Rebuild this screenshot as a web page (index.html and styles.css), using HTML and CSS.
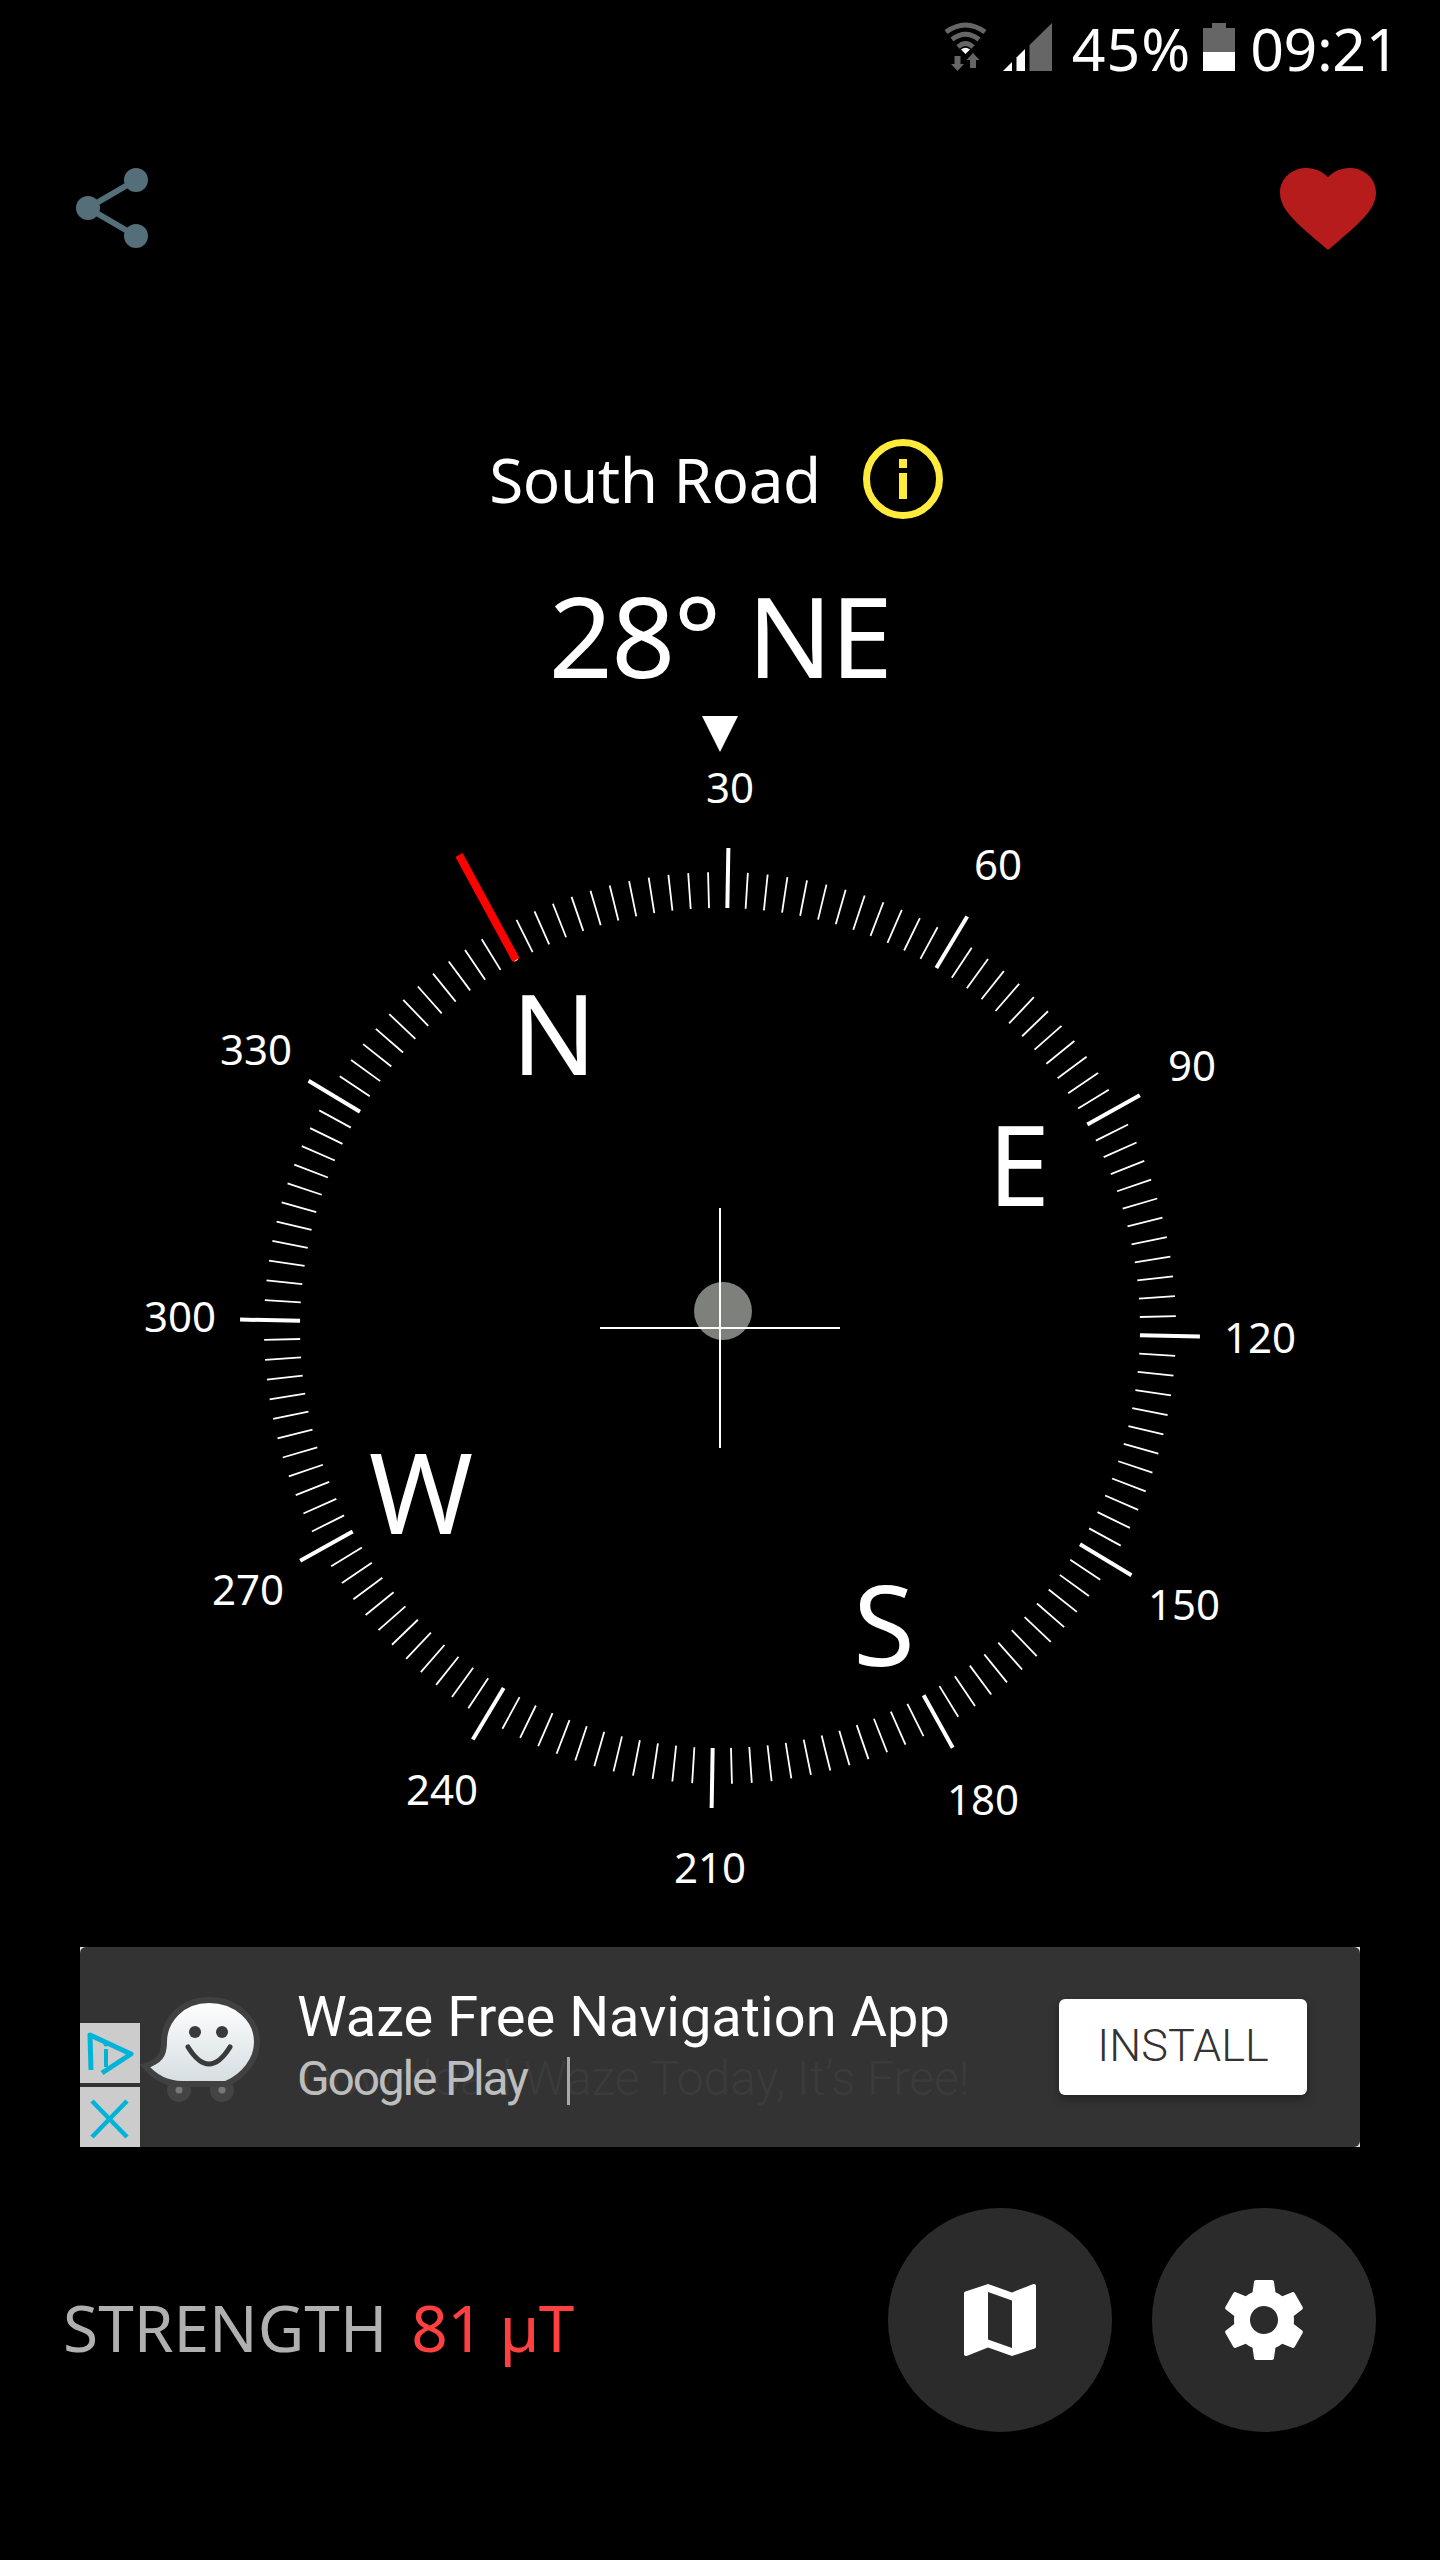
FILE: index.html
```html
<!DOCTYPE html>
<html lang="en">
<head>
<meta charset="utf-8">
<title>Compass</title>
<link rel="stylesheet" href="styles.css">
</head>
<body>
<main class="app">
  <header class="status">
    <svg class="st-wifi" viewBox="0 0 43 49" width="43" height="49">
      <g fill="none" stroke="#666" stroke-width="5"><path d="M2 10Q21.5-4 41 10"/><path d="M8 17.500Q21.500 7 35 17.500"/><path d="M14 25Q21.500 18 29 25"/></g>
      <path d="M17 27.500Q21.500 24 26 27.500L21.500 32z" fill="#fff"/>
      <path d="M10.500 34h6v8h3.500L13.500 49 7 42h3.500zM26 46v-8h-3.500L29 31l6.500 7H32v8z" fill="#666"/>
    </svg>
    <svg class="st-signal" viewBox="0 0 49 48" width="49" height="48">
      <path d="M0 48L9 39V48z" fill="#fff"/>
      <path d="M13.500 48V34.500L22 26V48z" fill="#fff"/>
      <path d="M26.500 48V22L49 0V48z" fill="#666"/>
    </svg>
    <span class="st-text st-pct">45%</span>
    <svg class="st-batt" viewBox="0 0 32 48" width="32" height="48">
      <path d="M9 0h14v5h9v24H0V5h9z" fill="#666"/>
      <rect y="29" width="32" height="19" fill="#fff"/>
    </svg>
    <span class="st-text st-time">09:21</span>
  </header>

  <nav class="topbar">
    <svg class="share" viewBox="0 0 73 80" width="73" height="80">
      <path d="M61 12L13 40L61 68" fill="none" stroke="#546e7a" stroke-width="6"/>
      <circle cx="61" cy="12" r="12" fill="#546e7a"/>
      <circle cx="13" cy="40" r="12" fill="#546e7a"/>
      <circle cx="61" cy="68" r="12" fill="#546e7a"/>
    </svg>
    <svg class="heart" viewBox="2 3 20 18.350" width="96" height="82" preserveAspectRatio="none">
      <path d="M12 21.350l-1.450-1.320C5.400 15.360 2 12.280 2 8.500 2 5.420 4.420 3 7.500 3c1.740 0 3.410.81 4.500 2.090C13.090 3.810 14.760 3 16.500 3 19.580 3 22 5.420 22 8.500c0 3.780-3.400 6.860-8.550 11.540L12 21.350z" fill="#b71c1c"/>
    </svg>
  </nav>

  <section class="road">
    <h2 class="road-name">South Road</h2>
    <svg class="info" viewBox="0 0 80 80" width="80" height="80">
      <circle cx="40" cy="40" r="36.500" fill="none" stroke="#ffeb3b" stroke-width="7"/>
      <rect x="36" y="20" width="8" height="9" fill="#ffeb3b"/>
      <rect x="36" y="34" width="8" height="26" fill="#ffeb3b"/>
    </svg>
  </section>

  <h1 class="heading">28° NE</h1>
  <div class="pointer"></div>

  <section class="compass">
    <svg class="dial" viewBox="-720 -568 1440 1180" width="1440" height="1180">
      <defs>
        <linearGradient id="blob" x1="0" y1="0" x2="0" y2="1">
          <stop offset="0" stop-color="#fff"/>
          <stop offset="1" stop-color="#d5dde1"/>
        </linearGradient>
        <g id="sector">
          <line class="major" x1="0" y1="-420" x2="0" y2="-480"/>
          <g class="minor">
            <line y1="-420" y2="-456" transform="rotate(2.500)"/>
            <line y1="-420" y2="-456" transform="rotate(5)"/>
            <line y1="-420" y2="-456" transform="rotate(7.500)"/>
            <line y1="-420" y2="-456" transform="rotate(10)"/>
            <line y1="-420" y2="-456" transform="rotate(12.500)"/>
            <line y1="-420" y2="-456" transform="rotate(15)"/>
            <line y1="-420" y2="-456" transform="rotate(17.500)"/>
            <line y1="-420" y2="-456" transform="rotate(20)"/>
            <line y1="-420" y2="-456" transform="rotate(22.500)"/>
            <line y1="-420" y2="-456" transform="rotate(25)"/>
            <line y1="-420" y2="-456" transform="rotate(27.500)"/>
          </g>
        </g>
      </defs>
      <g transform="rotate(1)">
        <use href="#sector"/>
        <use href="#sector" transform="rotate(30)"/>
        <use href="#sector" transform="rotate(60)"/>
        <use href="#sector" transform="rotate(90)"/>
        <use href="#sector" transform="rotate(120)"/>
        <use href="#sector" transform="rotate(150)"/>
        <use href="#sector" transform="rotate(180)"/>
        <use href="#sector" transform="rotate(210)"/>
        <use href="#sector" transform="rotate(240)"/>
        <use href="#sector" transform="rotate(270)"/>
        <use href="#sector" transform="rotate(300)"/>
        <use href="#sector" transform="rotate(330)"/>
      </g>
      <line class="needle" x1="-261" y1="-473" x2="-204" y2="-368"/>
      <circle cx="3" cy="-17" r="29" fill="#7d807b"/>
      <line class="cross" x1="-120" y1="0" x2="120" y2="0"/>
      <line class="cross" x1="0" y1="-120" x2="0" y2="120"/>
    </svg>
    <span class="deg d30">30</span>
    <span class="deg d60">60</span>
    <span class="deg d90">90</span>
    <span class="deg d120">120</span>
    <span class="deg d150">150</span>
    <span class="deg d180">180</span>
    <span class="deg d210">210</span>
    <span class="deg d240">240</span>
    <span class="deg d270">270</span>
    <span class="deg d300">300</span>
    <span class="deg d330">330</span>
    <span class="card cn">N</span>
    <span class="card ce">E</span>
    <span class="card cs">S</span>
    <span class="card cw">W</span>
  </section>

  <aside class="ad">
    <div class="ad-inner">
      <svg class="waze" viewBox="0 0 121 110" width="121" height="110">
        <circle cx="39" cy="95" r="12" fill="#444"/>
        <circle cx="82" cy="95" r="12" fill="#444"/>
        <circle cx="39" cy="95" r="3.500" fill="#777"/>
        <circle cx="82" cy="95" r="3.500" fill="#777"/>
        <path d="M69 5C42 5 24 25 24 47 24 60 20 66 5 71 15 83 28 89 42 89H86C104 81 117 65 117 47 117 24 96 5 69 5Z" fill="url(#blob)" stroke="#414141" stroke-width="6"/>
        <circle cx="55" cy="37" r="6" fill="#3a3a3a"/>
        <circle cx="82" cy="37" r="6" fill="#3a3a3a"/>
        <path d="M48 52Q69 86 90 52" fill="none" stroke="#3a3a3a" stroke-width="5" stroke-linecap="round"/>
      </svg>
      <div class="ad-copy">
        <div class="ad-title">Waze Free Navigation App</div>
        <div class="ad-sub">
          <span class="ad-ghost">Download Waze Today, It’s Free!</span>
          <span class="ad-play">Google Play</span>
          <span class="ad-caret"></span>
        </div>
      </div>
      <button class="ad-btn">INSTALL</button>
    </div>
    <div class="ad-badges">
      <div class="ad-badge">
        <svg viewBox="0 0 60 60" width="60" height="60">
          <path d="M11 47L10 12 51 31 22 50" fill="none" stroke="#00b4d8" stroke-width="5" stroke-linejoin="round"/>
          <path d="M26 26v18" stroke="#00b4d8" stroke-width="4"/>
          <circle cx="26" cy="21" r="2.500" fill="#00b4d8"/>
        </svg>
      </div>
      <div class="ad-badge">
        <svg viewBox="0 0 60 60" width="60" height="60">
          <path d="M12 14L47 50M47 14L12 50" stroke="#00b4d8" stroke-width="4.500" fill="none"/>
        </svg>
      </div>
    </div>
  </aside>

  <footer class="bottom">
    <div class="strength"><span class="str-label">STRENGTH</span><span class="str-value">81 µT</span></div>
    <div class="fabs">
      <div class="fab">
        <svg viewBox="0 0 24 24" width="96" height="96"><path d="M20.500 3l-.16.03L15 5.100 9 3 3.360 4.900c-.21.07-.36.25-.36.48V20.500c0 .28.22.5.5.5l.16-.03L9 18.900l6 2.100 5.640-1.900c.21-.07.36-.25.36-.48V3.500c0-.28-.22-.5-.5-.5zM15 19l-6-2.110V5l6 2.110V19z" fill="#fff"/></svg>
      </div>
      <div class="fab">
        <svg viewBox="0 0 24 24" width="96" height="96"><path d="M19.430 12.980c.04-.32.07-.64.07-.98s-.03-.66-.07-.98l2.110-1.650c.19-.15.24-.42.12-.64l-2-3.460c-.12-.22-.39-.3-.61-.22l-2.490 1c-.52-.4-1.080-.73-1.690-.98l-.38-2.650C14.460 2.180 14.250 2 14 2h-4c-.25 0-.46.18-.49.42l-.38 2.650c-.61.25-1.170.59-1.690.98l-2.490-1c-.23-.09-.49 0-.61.22l-2 3.460c-.13.22-.07.49.12.64l2.110 1.650c-.04.32-.07.65-.07.98s.03.66.07.98l-2.110 1.650c-.19.15-.24.42-.12.64l2 3.460c.12.22.39.3.61.22l2.490-1c.52.4 1.080.73 1.690.98l.38 2.650c.03.24.24.42.49.42h4c.25 0 .46-.18.49-.42l.38-2.650c.61-.25 1.170-.59 1.690-.98l2.490 1c.23.09.49 0 .61-.22l2-3.460c.12-.22.07-.49-.12-.64l-2.110-1.650zM12 15.500c-1.930 0-3.500-1.570-3.500-3.500s1.570-3.500 3.500-3.500 3.500 1.570 3.500 3.500-1.570 3.500-3.500 3.500z" fill="#fff"/></svg>
      </div>
    </div>
  </footer>
</main>
</body>
</html>
```
FILE: styles.css
```css
* { box-sizing: border-box; }
html, body { margin: 0; padding: 0; background: #000; }
body { font-family: "Noto Sans", "Open Sans", sans-serif; color: #fff; }
svg { display: block; }
.app { width: 1440px; height: 2560px; overflow: hidden; }

.status { height: 100px; display: flex; align-items: flex-start; padding: 22px 41px 0 0; justify-content: flex-end; }
.st-wifi { margin-right: 16px; }
.st-signal { margin: 1px 20px 0 0; }
.st-text { font-size: 59px; line-height: 60px; margin-top: -4px; letter-spacing: -.4px; }
.st-pct { margin-right: 12px; letter-spacing: 1px; }
.st-batt { margin: 1px 15px 0 0; }

.topbar { height: 82px; margin-top: 67px; display: flex; justify-content: space-between; align-items: flex-start; padding: 1px 64px 0 75px; }

.road { height: 80px; margin-top: 190px; display: flex; align-items: center; justify-content: center; gap: 42px; padding-right: 8px; }
.road-name { margin: 0; font-size: 62px; font-weight: 400; line-height: 80px; letter-spacing: -.4px; }

.heading { margin: 56px 0 21px; font-size: 112px; font-weight: 400; line-height: 120px; text-align: center; letter-spacing: -1.700px; }
.pointer { width: 0; height: 0; margin: 0 auto; border-left: 18px solid transparent; border-right: 18px solid transparent; border-top: 36px solid #fff; }

.compass { position: relative; width: 1440px; height: 1187px; margin-top: 8px; }
.dial { position: absolute; left: 0; top: 0; }
.major { stroke: #fff; stroke-width: 4; }
.minor line { stroke: #fff; stroke-width: 1.800; }
.needle { stroke: #f00; stroke-width: 8; }
.cross { stroke: #fff; stroke-width: 2; }

.deg, .card { position: absolute; transform: translate(-50%, -50%); line-height: 1; }
.deg { font-size: 42px; }
.d30 { left: 730px; top: 27px; }
.d60 { left: 998px; top: 104px; }
.d90 { left: 1192px; top: 305px; }
.d120 { left: 1260px; top: 577px; }
.d150 { left: 1184px; top: 844px; }
.d180 { left: 983px; top: 1039px; }
.d210 { left: 710px; top: 1107px; }
.d240 { left: 442px; top: 1029px; }
.d270 { left: 248px; top: 829px; }
.d300 { left: 180px; top: 556px; }
.d330 { left: 256px; top: 289px; }
.card { font-size: 112px; }
.cn { left: 554px; top: 272px; }
.ce { left: 1019px; top: 403px; }
.cs { left: 884px; top: 863px; }
.cw { left: 421px; top: 731px; }

.ad { position: relative; width: 1280px; height: 200px; margin: 0 0 0 80px; background: #ddd; }
.ad-inner { height: 200px; background: #333; border-radius: 6px; display: flex; align-items: flex-start; padding-left: 60px; font-family: Roboto, sans-serif; }
.waze { margin-top: 48px; flex: none; }
.ad-copy { margin: 38px 0 0 36px; width: 739px; }
.ad-title { font-size: 56px; line-height: 64px; white-space: nowrap; }
.ad-sub { position: relative; height: 60px; margin-top: 0; display: flex; align-items: center; }
.ad-ghost { position: absolute; left: 4px; top: 0; font-size: 48px; line-height: 60px; color: #3b3b3b; white-space: nowrap; font-weight: 300; }
.ad-play { position: relative; font-size: 48px; line-height: 60px; color: #bdbdbd; letter-spacing: -2.200px; white-space: nowrap; }
.ad-caret { width: 3px; height: 48px; background: #aaa; margin: 4px 0 0 40px; position: relative; }
.ad-btn { flex: none; width: 248px; height: 96px; margin: 52px 0 0 23px; background: #fff; border: 0; border-radius: 6px; box-shadow: 0 4px 10px rgba(0,0,0,.35); color: #333; font-family: Roboto, sans-serif; font-size: 45px; font-weight: 300; padding: 0 0 4px; }
.ad-badges { position: absolute; left: 0; bottom: 0; width: 60px; display: flex; flex-direction: column; gap: 4px; }
.ad-badge { width: 60px; height: 60px; background: #ccc; }

.bottom { margin-top: 61px; display: flex; justify-content: space-between; align-items: center; padding: 0 64px 0 63px; }
.strength { display: flex; gap: 24px; font-size: 64px; line-height: 80px; padding-top: 16px; }
.str-label { color: #b0b0b0; }
.str-value { color: #ff4040; letter-spacing: -.6px; }
.fabs { display: flex; gap: 40px; }
.fab { width: 224px; height: 224px; border-radius: 50%; background: #2b2b2b; display: flex; align-items: center; justify-content: center; }
```
